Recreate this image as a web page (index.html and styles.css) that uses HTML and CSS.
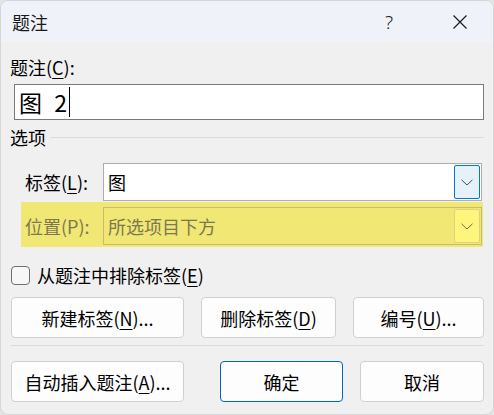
FILE: index.html
```html
<!DOCTYPE html>
<html lang="zh-CN">

<head>
    <meta charset="UTF-8">
    <meta name="viewport" content="width=device-width, initial-scale=1.0">
    <title>题注</title>
    <link rel="stylesheet" href="styles.css">
</head>

<body>

    <div class="window">
        <div class="titlebar">
            <span class="title">题注</span>
            <span class="help">?</span>
            <span class="close">
                <svg width="14" height="14" viewBox="0 0 14 14">
                    <path d="M0.5 0.5 L13.5 13.5 M13.5 0.5 L0.5 13.5" stroke="#1a1a1a" stroke-width="1.2" fill="none"/>
                </svg>
            </span>
        </div>

        <div class="content">
            <div class="label">题注(<u>C</u>):</div>
            <div class="caption-input">
                <span class="caption-text">图 2</span><span class="cursor"></span>
            </div>

            <div class="group-title">
                <span>选项</span>
                <span class="group-line"></span>
            </div>

            <div class="field-row">
                <span class="field-label">标签(<u>L</u>):</span>
                <div class="combo">
                    <span class="combo-text">图</span>
                    <span class="combo-btn">
                        <svg width="12" height="7" viewBox="0 0 12 7">
                            <path d="M0.5 0.8 L6 6 L11.5 0.8" stroke="#505050" stroke-width="1" fill="none"/>
                        </svg>
                    </span>
                </div>
            </div>

            <div class="field-row highlight">
                <span class="field-label">位置(P):</span>
                <div class="combo">
                    <span class="combo-text">所选项目下方</span>
                    <span class="combo-btn">
                        <svg width="12" height="7" viewBox="0 0 12 7">
                            <path d="M0.5 0.8 L6 6 L11.5 0.8" stroke="#707050" stroke-width="1" fill="none"/>
                        </svg>
                    </span>
                </div>
            </div>

            <label class="check-row">
                <span class="checkbox"></span>
                <span>从题注中排除标签(<u>E</u>)</span>
            </label>

            <div class="button-row">
                <button class="btn btn-new">新建标签(<u>N</u>)...</button>
                <button class="btn btn-delete">删除标签(<u>D</u>)</button>
                <button class="btn btn-number">编号(<u>U</u>)...</button>
            </div>

            <div class="separator"></div>

            <div class="button-row">
                <button class="btn btn-auto">自动插入题注(<u>A</u>)...</button>
                <button class="btn btn-ok">确定</button>
                <button class="btn btn-cancel">取消</button>
            </div>
        </div>
    </div>

</body>

</html>
```

FILE: styles.css
```css
body {
    margin: 0;
    background-color: #e4e4e4;
    font-family: "Noto Sans CJK SC", "Noto Sans", sans-serif;
    font-size: 18px;
    color: #000;
}

u {
    text-decoration-thickness: 1px;
    text-underline-offset: 3px;
}

.window {
    width: 494px;
    height: 415px;
    background-color: #f0f0f0;
    border-radius: 8px;
    overflow: hidden;
    box-sizing: border-box;
    border: 1px solid #d6d6d6;
}

.titlebar {
    height: 41px;
    background-color: #eff3f9;
    display: flex;
    align-items: center;
    line-height: 24px;
}

.title {
    margin-left: 11px;
    color: #1a1a1a;
}

.help {
    margin-left: auto;
    font-family: "Noto Sans", sans-serif;
    font-size: 19px;
    font-weight: 300;
    color: #222;
}

.close {
    display: flex;
    margin-left: 60px;
    margin-right: 26px;
}

.content {
    padding: 0 9px;
}

.label {
    margin-top: 13px;
    line-height: 24px;
}

.caption-input {
    margin-top: 5px;
    margin-left: 4px;
    width: 470px;
    height: 36px;
    box-sizing: border-box;
    border: 1px solid #7a7a7a;
    background-color: #fff;
    display: flex;
    align-items: center;
    padding-left: 4px;
    font-size: 23px;
}

.caption-text {
    word-spacing: 7px;
}

.cursor {
    width: 1px;
    height: 30px;
    background-color: #000;
    margin-left: 2px;
}

.group-title {
    margin-top: 5px;
    display: flex;
    align-items: center;
    line-height: 24px;
}

.group-line {
    flex: 1;
    height: 1px;
    background-color: #dcdcdc;
    margin-left: 4px;
}

.field-row {
    margin-left: 11px;
    width: 462px;
    box-sizing: border-box;
    padding: 0 1px 0 4px;
    display: flex;
    align-items: center;
}

.group-title + .field-row {
    margin-top: 14px;
}

.field-label {
    width: 78px;
    line-height: 24px;
}

.combo {
    flex: 1;
    height: 38px;
    box-sizing: border-box;
    border: 1px solid #adadad;
    background-color: #fff;
    display: flex;
    align-items: center;
}

.combo-text {
    flex: 1;
    padding-left: 4px;
}

.combo-btn {
    width: 26px;
    height: 34px;
    box-sizing: border-box;
    margin-right: 1px;
    border: 1px solid #0078d4;
    border-radius: 2px;
    background-color: #e5f1fb;
    display: flex;
    align-items: center;
    justify-content: center;
}

.highlight {
    margin-top: 1px;
    height: 45px;
    padding-top: 5px;
    padding-bottom: 2px;
    background-color: #f0e774;
    color: #7d7850;
}

.highlight .combo {
    background-color: #f0e774;
    border-color: #c4bd6c;
}

.highlight .combo-btn {
    background-color: #fdf57c;
    border-color: #dcd47a;
}

.check-row {
    margin-top: 16px;
    display: flex;
    align-items: center;
    line-height: 24px;
}

.checkbox {
    width: 19px;
    height: 19px;
    box-sizing: border-box;
    border: 1px solid #6f6f6f;
    border-radius: 4px;
    background-color: #f7f7f7;
    margin-left: 1px;
    margin-right: 7px;
}

.button-row {
    display: flex;
    margin-left: 1px;
    width: 473px;
}

.check-row + .button-row {
    margin-top: 10px;
}

.btn {
    height: 41px;
    box-sizing: border-box;
    border: 1px solid #d0d0d0;
    border-radius: 4px;
    background-color: #fdfdfd;
    font-family: inherit;
    font-size: 18px;
    color: #000;
    padding: 0;
}

.btn-new { width: 173px; }
.btn-delete { width: 135px; margin-left: 17px; }
.btn-number { width: 131px; margin-left: 17px; }
.btn-auto { width: 173px; }
.btn-ok { width: 123px; margin-left: 36px; border-color: #0067c0; }
.btn-cancel { width: 124px; margin-left: 17px; }

.separator {
    margin: 7px 0 15px 1px;
    width: 473px;
    height: 1px;
    background-color: #dcdcdc;
}
```
